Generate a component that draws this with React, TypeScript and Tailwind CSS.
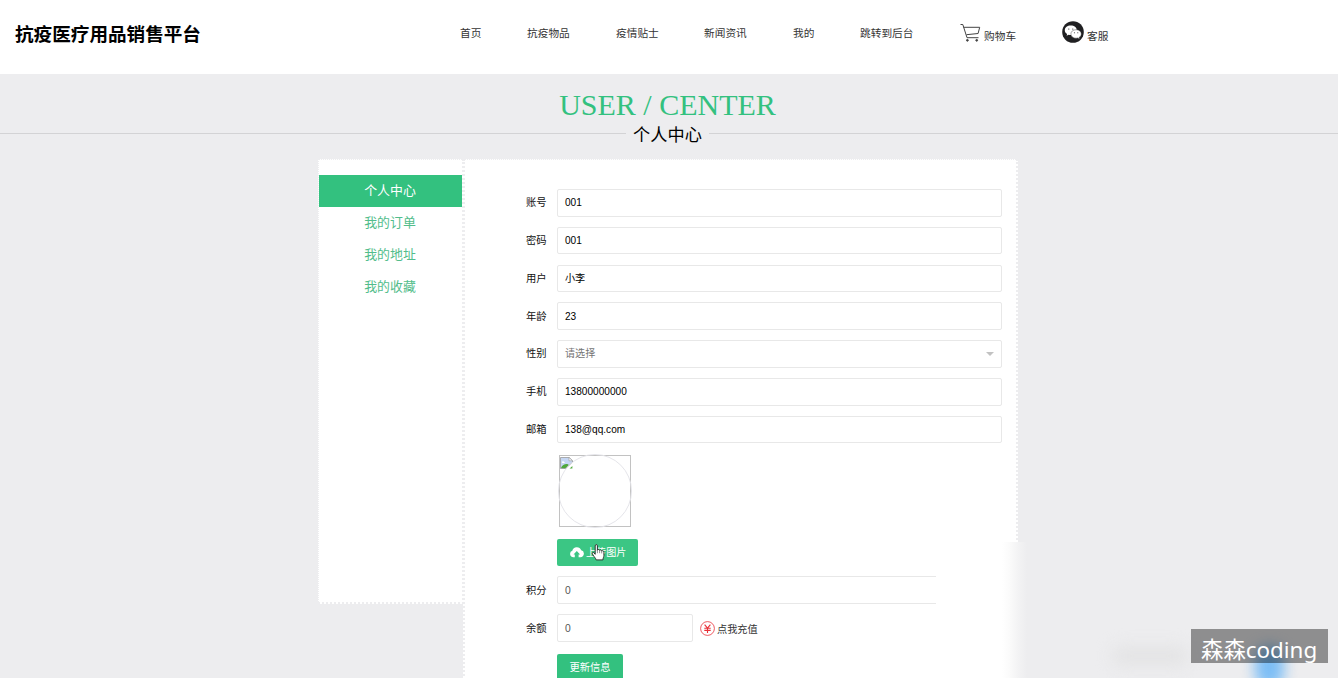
import React from "react";

const sans = "font-['Liberation_Sans','Noto_Sans_CJK_SC',sans-serif]";

const links = [
  { text: "首页", width: "w-[67px]" },
  { text: "抗疫物品", width: "w-[89px]" },
  { text: "疫情贴士", width: "w-[88px]" },
  { text: "新闻资讯", width: "w-[89px]" },
  { text: "我的", width: "w-[67px]" },
  { text: "跳转到后台", width: "w-[100px]" },
];

const menu = ["个人中心", "我的订单", "我的地址", "我的收藏"];

const fields = [
  { label: "账号", value: "001" },
  { label: "密码", value: "001" },
  { label: "用户", value: "小李" },
  { label: "年龄", value: "23" },
  { label: "性别", value: "请选择", select: true },
  { label: "手机", value: "13800000000" },
  { label: "邮箱", value: "138@qq.com" },
];

function CartIcon() {
  return (
    <svg className="h-[20px] w-[22px] shrink-0" viewBox="0 0 22 20" fill="none" stroke="#444" strokeWidth="1">
      <path d="M.5 1.5h2.3L7 14.7h11.5M3.5 4.3h16.2l-1.6 6.2-11.6 1.2" />
      <circle cx="7.4" cy="17.3" r=".9" fill="#444" />
      <circle cx="16.7" cy="17.3" r=".9" fill="#444" />
    </svg>
  );
}

function WechatIcon() {
  return (
    <svg className="h-[22px] w-[22px] shrink-0" viewBox="0 0 22 22">
      <circle cx="11" cy="11" r="10.8" fill="#202022" />
      <path d="M8.8 4.6c-3.4 0-6 2-6 4.7 0 1.6.9 2.9 2.3 3.8l-.5 1.7 2-1c.7.2 1.4.3 2.2.3 3.4 0 6-2.1 6-4.8s-2.6-4.7-6-4.7z" fill="#fff" />
      <path d="M14.1 8.7c-3 0-5.2 1.8-5.2 4.2s2.2 4.3 5.2 4.3c.6 0 1.2-.1 1.7-.3l1.8 1-.4-1.6c1.3-.8 2.1-2 2.1-3.4 0-2.4-2.2-4.2-5.2-4.2z" fill="#fff" stroke="#202022" strokeWidth=".4" />
      <g fill="#202022">
        <circle cx="6.8" cy="8" r=".6" />
        <circle cx="10.8" cy="8" r=".6" />
        <circle cx="12.4" cy="11.7" r=".5" />
        <circle cx="15.8" cy="11.7" r=".5" />
      </g>
    </svg>
  );
}

function BrokenImage() {
  return (
    <svg className="h-[12px] w-[13px]" viewBox="0 0 13 12">
      <path d="M.5.5h8.7l3.3 3.2v1.8L5.4 11.5H.5z" fill="#c5d6f3" stroke="#9a9a9a" strokeWidth=".8" />
      <path d="M9 .5v3.3h3.5z" fill="#fff" stroke="#999" strokeWidth=".6" />
      <path d="M2 5.2c0-1 1.4-1.3 1.8-.5 1 0 1.3 1.1.6 1.4H2.3z" fill="#fff" />
      <path d="M1 11c1-2.6 4-4.4 6.8-3.8L8.9 8l-3.6 3.2z" fill="#50a83c" />
      <path d="m10.2 10.9 2.2-1.8v2.4H9.6z" fill="#50a83c" />
    </svg>
  );
}

function UploadIcon() {
  return (
    <svg className="h-[11px] w-[14px] shrink-0" viewBox="0 0 14 11" fill="#fff">
      <path d="M4.8 10.2H3.5A3.3 3.3 0 0 1 2.3 3.8 4.7 4.7 0 0 1 11.2 3.3a3.5 3.5 0 0 1-.8 6.9H8.6V7.5h1.5L6.8 4 3.5 7.5h1.3z" />
    </svg>
  );
}

function HandCursor() {
  return (
    <svg className="absolute left-[34px] top-[5px] h-[17px] w-[14px]" viewBox="0 0 14 17">
      <path
        d="M4.2 10.3V1.9c0-1.8 2.2-1.8 2.2 0v4.3c.3-1 2-1 2.2.2.6-.8 2-.5 2.1.5.8-.6 2.2 0 2.2 1.3v3.2c0 1.6-.9 2.4-1 4.5H5.2c-.5-2-2.1-2.7-3.7-5.8C.7 8.7 2.3 7.9 3 8.9z"
        fill="#fff"
        stroke="#222"
        strokeWidth=".9"
      />
      <path d="M6.4 6v3.2M8.6 6.6v2.6M10.7 7v2.4" stroke="#444" strokeWidth=".6" />
    </svg>
  );
}

function Label({ text }: { text: string }) {
  return <label className="w-[62px] shrink-0 whitespace-nowrap pl-[31px] text-[10.3px] text-[#111]">{text}</label>;
}

function Row({ label, value, select }: { label: string; value: string; select?: boolean }) {
  return (
    <div className="flex h-[27.5px] items-center">
      <Label text={label} />
      <div
        className={
          "flex h-full flex-1 items-center justify-between rounded-[2px] border border-[#e8e8e8] px-[7px] text-[10.1px] " +
          (select ? "text-[#757575]" : "text-black")
        }
      >
        <span>{value}</span>
        {select && (
          <svg className="h-[4px] w-[8px]" viewBox="0 0 8 4">
            <path d="M0 0h8L4 4z" fill="#c2c2c2" />
          </svg>
        )}
      </div>
    </div>
  );
}

export default function App() {
  return (
    <div className={"relative h-[678px] w-full overflow-hidden bg-[#ededef] text-black " + sans}>
      <header className="flex h-[74px] bg-white">
        <h1 className="w-[460px] whitespace-nowrap pl-[15px] pt-[21px] text-[18.6px] font-bold leading-[28px]">
          抗疫医疗用品销售平台
        </h1>
        <nav className="flex whitespace-nowrap text-[10.7px] leading-[16px] text-[#333]">
          {links.map((l) => (
            <a key={l.text} className={"block shrink-0 pt-[25px] " + l.width}>
              {l.text}
            </a>
          ))}
          <a className="flex w-[102px] shrink-0 pt-[23px]">
            <CartIcon />
            <span className="ml-[2px] mt-[5px]">购物车</span>
          </a>
          <a className="flex shrink-0 pt-[21px]">
            <WechatIcon />
            <span className="ml-[3px] mt-[7px]">客服</span>
          </a>
        </nav>
      </header>

      <section className="flex h-[85px] flex-col pt-[14px]">
        <h2 className="pr-[3px] text-center font-['Liberation_Serif',serif] text-[30px] leading-[34px] text-[#33c17f]">
          USER / CENTER
        </h2>
        <div className="flex h-[23px] items-center">
          <div className="h-px w-[626px] bg-[#d3d3d5]" />
          <span className="w-[83px] pt-[3px] text-center text-[17.2px] leading-[23px]">个人中心</span>
          <div className="h-px flex-1 bg-[#d3d3d5]" />
        </div>
      </section>

      <main className="flex items-start pl-[318px]">
        <aside className="h-[445px] w-[146px] shrink-0 border-2 border-l-1 border-t-1 border-dotted border-[#ededef] bg-white pt-[15px]">
          {menu.map((m, i) => (
            <div
              key={m}
              className={
                "flex h-[32px] items-center justify-center pr-px text-[12.9px] leading-[18px] " +
                (i === 0 ? "bg-[#33c17f] pb-px text-white" : "pb-px text-[#52bd8b]")
              }
            >
              {m}
            </div>
          ))}
        </aside>
        <div className="-ml-px h-[600px] w-[555px] shrink-0 border-2 border-t-1 border-dotted border-[#ededef] bg-white pl-[30px] pr-[14px] pt-[29px]">
          <div className="flex flex-col gap-[10.33px]">
            {fields.map((f) => (
              <Row key={f.label} {...f} />
            ))}
          </div>
          <div className="relative ml-[64px] mt-[12px] h-[72px] w-[72px] border border-[#c2c2c2] pt-px">
            <BrokenImage />
            <div className="absolute -left-[2px] -top-[2px] h-[74px] w-[74px] rounded-full border border-[#e5e5ea]" />
          </div>
          <button className="relative ml-[62px] mt-[12px] flex h-[27px] w-[81px] items-center rounded-[2px] bg-[#3bc684] pl-[13px] text-[10.1px] text-white">
            <UploadIcon />
            <span className="ml-[2px] whitespace-nowrap">上传图片</span>
            <HandCursor />
          </button>
          <div className="mt-[10px] flex h-[28px] items-center">
            <Label text="积分" />
            <div className="flex h-full flex-1 items-center rounded-[2px] border border-[#e8e8e8] px-[7px] text-[10.3px] text-[#555]">0</div>
          </div>
          <div className="mt-[10px] flex h-[28px] items-center">
            <Label text="余额" />
            <div className="flex h-full w-[136px] items-center rounded-[2px] border border-[#e8e8e8] px-[7px] text-[10.3px] text-[#555]">0</div>
            <svg className="ml-[7px] h-[15px] w-[15px]" viewBox="0 0 15 15" fill="none" stroke="#e83038">
              <circle cx="7.5" cy="7.5" r="6.9" strokeWidth=".8" />
              <path d="m4.6 3.6 2.9 3.6 2.9-3.6M4.3 7.3h6.4M4.3 9.4h6.4M7.5 7v5" strokeWidth="1.1" />
            </svg>
            <span className="ml-[2px] mt-[2px] whitespace-nowrap text-[10.2px] text-[#333]">点我充值</span>
          </div>
          <button className="ml-[62px] mt-[12px] flex h-[27px] w-[66px] items-center justify-center rounded-[2px] bg-[#33c17f] text-[10.3px] text-white">
            更新信息
          </button>
        </div>
      </main>

      <div className="absolute left-[936px] top-[542px] h-[136px] w-[94px] bg-[linear-gradient(to_right,#fff_0,#fff_66px,#fbfbfb_73px,#f3f3f4_82px,#ededef_91px)]" />
      <div className="absolute left-[1112px] top-[647px] h-[18px] w-[76px] rounded-full bg-[#e3e3e4] blur-[8px]" />
      <div className="absolute left-[1255px] top-[646px] h-[42px] w-[29px] rounded-full bg-[#7bbdf5] blur-[7px]" />
      <div className="absolute left-[1191px] top-[629px] flex h-[34px] w-[137px] items-center whitespace-nowrap bg-black/40 pl-[10px] pt-[7px] font-['Noto_Sans','Noto_Sans_CJK_SC',sans-serif] text-[22.4px] leading-[34px] text-white">
        森森coding
      </div>
    </div>
  );
}
